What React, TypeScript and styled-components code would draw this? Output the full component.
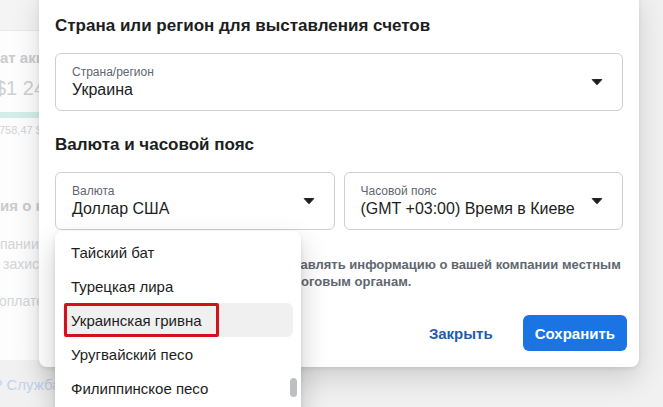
import React from "react";
import styled, { createGlobalStyle } from "styled-components";

const Global = createGlobalStyle`
  html, body { margin: 0; padding: 0; }
  body { font-family: "Liberation Sans", Arial, Helvetica, sans-serif; }
  * { box-sizing: border-box; }
`;

const Viewport = styled.div`
  position: relative;
  width: 663px;
  height: 407px;
  overflow: hidden;
  background: #f1f1f2;
`;

/* ---------- background page (behind the dialog) ---------- */
const Backdrop = styled.div`
  display: flex;
  flex-direction: column;
  width: 600px;
  height: 100%;
`;

const TopStrip = styled.div`
  height: 31px;
  background: #f4f4f5;
  border-bottom: 1px solid #e9e9ea;
`;

const BgCard = styled.div`
  height: 329px;
  background: #fdfdfd;
  display: flex;
  flex-direction: column;
`;

const BgTitle = styled.div<{ $top: number; $indent?: number }>`
  margin-top: ${(p) => p.$top}px;
  margin-left: ${(p) => p.$indent ?? 0}px;
  font-size: 15px;
  line-height: 18px;
  font-weight: 700;
  color: #c9cbce;
  white-space: nowrap;
`;

const BgAmount = styled.div`
  margin-top: 9px;
  margin-left: -5px;
  font-size: 20px;
  line-height: 24px;
  color: #cdd0d3;
  white-space: nowrap;
`;

const BgBar = styled.div`
  margin-top: 12px;
  height: 6px;
  width: 300px;
  background: #d3eee8;
`;

const BgSmall = styled.div`
  margin-top: 6px;
  margin-left: -1px;
  font-size: 11px;
  line-height: 13px;
  color: #d2d4d7;
  white-space: nowrap;
`;

const BgText = styled.div<{ $top: number; $indent?: number }>`
  margin-top: ${(p) => p.$top}px;
  margin-left: ${(p) => p.$indent ?? 0}px;
  font-size: 14px;
  line-height: 20px;
  color: #d3d5d8;
  white-space: nowrap;
`;

const BgFooter = styled.div`
  margin-top: 15px;
  margin-left: -6px;
  font-size: 15px;
  line-height: 20px;
  color: #c3d3ea;
  white-space: nowrap;
`;

/* ---------- dialog ---------- */
const Modal = styled.div`
  position: absolute;
  left: 39px;
  top: -12px;
  width: 600px;
  padding: 28px 16px 16px;
  background: #ffffff;
  border-radius: 8px;
  box-shadow: 0 12px 28px rgba(0, 0, 0, 0.14), 0 2px 4px rgba(0, 0, 0, 0.08);
`;

const Heading = styled.h2<{ $top?: number }>`
  margin: ${(p) => p.$top ?? 0}px 0 17px;
  font-size: 17px;
  line-height: 20px;
  font-weight: 700;
  color: #1c1e21;
`;

const FieldRow = styled.div`
  display: grid;
  grid-template-columns: 1fr 1fr;
  gap: 9px;
`;

const FieldWrap = styled.div`
  position: relative;
`;

const Field = styled.div`
  display: flex;
  align-items: center;
  height: 58px;
  border: 1px solid #ccd0d5;
  border-radius: 6px;
  padding: 0 19px 0 16px;
  background: #fff;
`;

const FieldText = styled.div`
  flex: 1;
  display: flex;
  flex-direction: column;
  min-width: 0;
`;

const Label = styled.span`
  font-size: 12px;
  line-height: 16px;
  color: #606770;
`;

const Value = styled.span`
  font-size: 16px;
  line-height: 20px;
  color: #1c1e21;
  white-space: nowrap;
`;

const Caret = () => (
  <svg width="12" height="12" viewBox="0 0 12 12" aria-hidden="true">
    <path d="M1.2 3.6 H10.8 L6 8.8 Z" fill="#1c1e21" stroke="#1c1e21" strokeWidth="1" strokeLinejoin="round" />
  </svg>
);

const Menu = styled.div`
  position: absolute;
  left: 0;
  top: calc(100% + 1px);
  width: 246px;
  height: 200px;
  padding: 4px 8px;
  background: #fff;
  border-radius: 8px;
  box-shadow: 0 12px 28px rgba(0, 0, 0, 0.2), 0 2px 4px rgba(0, 0, 0, 0.1);
  z-index: 2;
`;

const MenuItem = styled.div<{ $active?: boolean }>`
  position: relative;
  height: 34px;
  display: flex;
  align-items: center;
  padding-left: 8px;
  border-radius: 6px;
  font-size: 15px;
  color: #1c1e21;
  background: ${(p) => (p.$active ? "#f0f0f1" : "transparent")};
  white-space: nowrap;
`;

const Annotation = styled.span`
  position: absolute;
  left: 1px;
  top: 0;
  width: 155px;
  height: 34px;
  border: 3px solid #d2111c;
  border-radius: 2px;
`;

const ScrollThumb = styled.span`
  position: absolute;
  right: 4px;
  top: 147px;
  width: 7px;
  height: 19px;
  border-radius: 4px;
  background: #bcc0c4;
`;

const Info = styled.p`
  margin: 26px 0 0;
  font-size: 13px;
  line-height: 17px;
  font-weight: 700;
  color: #606770;
`;

const InfoLine = styled.span`
  display: block;
  white-space: nowrap;
`;

const ButtonRow = styled.div`
  margin: 25px -4px 0 0;
  display: flex;
  justify-content: flex-end;
  gap: 18px;
`;

const Button = styled.button<{ $primary?: boolean }>`
  height: 36px;
  padding: 0 12px;
  border: none;
  border-radius: 6px;
  font-family: inherit;
  font-size: 15px;
  font-weight: 700;
  cursor: pointer;
  color: ${(p) => (p.$primary ? "#ffffff" : "#215eb0")};
  background: ${(p) => (p.$primary ? "#1b74e4" : "transparent")};
`;

const currencies = [
  "Тайский бат",
  "Турецкая лира",
  "Украинская гривна",
  "Уругвайский песо",
  "Филиппинское песо",
];

export default function App() {
  return (
    <>
      <Global />
      <Viewport>
        <Backdrop>
          <TopStrip />
          <BgCard>
            <BgTitle $top={18}>ат аккаунта</BgTitle>
            <BgAmount>$1 248,00</BgAmount>
            <BgBar />
            <BgSmall>758,47 $ израсходовано</BgSmall>
            <BgTitle $top={60}>ия о компании</BgTitle>
            <BgText $top={19}>пании</BgText>
            <BgText $top={0} $indent={3}>захист</BgText>
            <BgText $top={17} $indent={-1}>оплате</BgText>
          </BgCard>
          <BgFooter>? Служба поддержки</BgFooter>
        </Backdrop>

        <Modal>
          <Heading>Страна или регион для выставления счетов</Heading>
          <Field>
            <FieldText>
              <Label>Страна/регион</Label>
              <Value>Украина</Value>
            </FieldText>
            <Caret />
          </Field>

          <Heading $top={24}>Валюта и часовой пояс</Heading>
          <FieldRow>
            <FieldWrap>
              <Field>
                <FieldText>
                  <Label>Валюта</Label>
                  <Value>Доллар США</Value>
                </FieldText>
                <Caret />
              </Field>
              <Menu>
                {currencies.map((c) => (
                  <MenuItem key={c} $active={c === "Украинская гривна"}>
                    {c === "Украинская гривна" && <Annotation />}
                    {c}
                  </MenuItem>
                ))}
                <ScrollThumb />
              </Menu>
            </FieldWrap>
            <FieldWrap>
              <Field>
                <FieldText>
                  <Label>Часовой пояс</Label>
                  <Value>(GMT +03:00) Время в Киеве</Value>
                </FieldText>
                <Caret />
              </Field>
            </FieldWrap>
          </FieldRow>

          <Info>
            <InfoLine>Это нужно, чтобы мы смогли предоставлять информацию о вашей компании местным</InfoLine>
            <InfoLine>в том числе и государственным и налоговым органам.</InfoLine>
          </Info>

          <ButtonRow>
            <Button>Закрыть</Button>
            <Button $primary>Сохранить</Button>
          </ButtonRow>
        </Modal>
      </Viewport>
    </>
  );
}
